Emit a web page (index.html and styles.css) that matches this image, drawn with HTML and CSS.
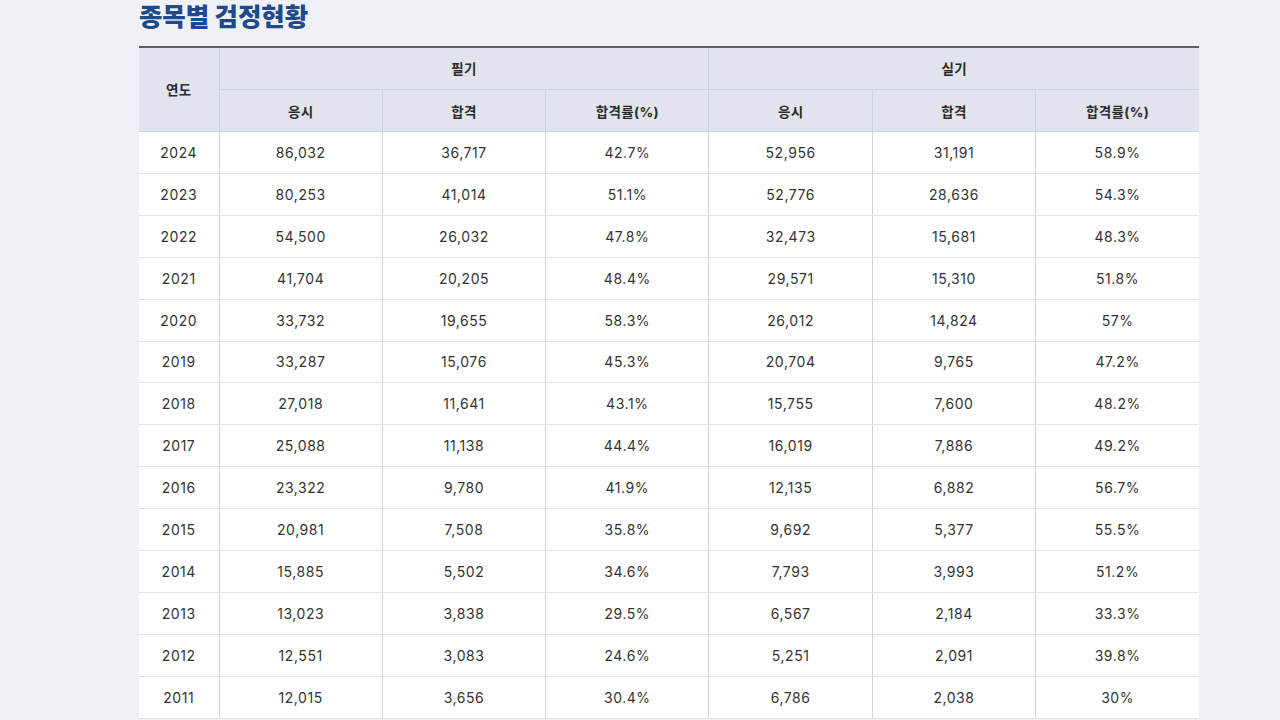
FILE: index.html
```html
<!DOCTYPE html>
<html lang="ko">
<head>
<meta charset="utf-8">
<title>종목별 검정현황</title>
<link rel="stylesheet" href="styles.css">
</head>
<body>
<main class="page">
  <h2 class="title">종목별 검정현황</h2>
  <table class="stats">
    <colgroup>
      <col class="c-year">
      <col class="c-data"><col class="c-data"><col class="c-data">
      <col class="c-data"><col class="c-data"><col class="c-data">
    </colgroup>
    <thead>
      <tr>
        <th rowspan="2" class="year-h">연도</th>
        <th colspan="3">필기</th>
        <th colspan="3">실기</th>
      </tr>
      <tr>
        <th>응시</th><th>합격</th><th>합격률(%)</th>
        <th>응시</th><th>합격</th><th>합격률(%)</th>
      </tr>
    </thead>
    <tbody>
      <tr><td>2024</td><td>86,032</td><td>36,717</td><td>42.7%</td><td>52,956</td><td>31,191</td><td>58.9%</td></tr>
      <tr><td>2023</td><td>80,253</td><td>41,014</td><td>51.1%</td><td>52,776</td><td>28,636</td><td>54.3%</td></tr>
      <tr><td>2022</td><td>54,500</td><td>26,032</td><td>47.8%</td><td>32,473</td><td>15,681</td><td>48.3%</td></tr>
      <tr><td>2021</td><td>41,704</td><td>20,205</td><td>48.4%</td><td>29,571</td><td>15,310</td><td>51.8%</td></tr>
      <tr><td>2020</td><td>33,732</td><td>19,655</td><td>58.3%</td><td>26,012</td><td>14,824</td><td>57%</td></tr>
      <tr><td>2019</td><td>33,287</td><td>15,076</td><td>45.3%</td><td>20,704</td><td>9,765</td><td>47.2%</td></tr>
      <tr><td>2018</td><td>27,018</td><td>11,641</td><td>43.1%</td><td>15,755</td><td>7,600</td><td>48.2%</td></tr>
      <tr><td>2017</td><td>25,088</td><td>11,138</td><td>44.4%</td><td>16,019</td><td>7,886</td><td>49.2%</td></tr>
      <tr><td>2016</td><td>23,322</td><td>9,780</td><td>41.9%</td><td>12,135</td><td>6,882</td><td>56.7%</td></tr>
      <tr><td>2015</td><td>20,981</td><td>7,508</td><td>35.8%</td><td>9,692</td><td>5,377</td><td>55.5%</td></tr>
      <tr><td>2014</td><td>15,885</td><td>5,502</td><td>34.6%</td><td>7,793</td><td>3,993</td><td>51.2%</td></tr>
      <tr><td>2013</td><td>13,023</td><td>3,838</td><td>29.5%</td><td>6,567</td><td>2,184</td><td>33.3%</td></tr>
      <tr><td>2012</td><td>12,551</td><td>3,083</td><td>24.6%</td><td>5,251</td><td>2,091</td><td>39.8%</td></tr>
      <tr><td>2011</td><td>12,015</td><td>3,656</td><td>30.4%</td><td>6,786</td><td>2,038</td><td>30%</td></tr>
    </tbody>
  </table>
</main>
</body>
</html>
```
FILE: styles.css
```css
html, body {
  margin: 0;
  padding: 0;
  background: #f0f1f6;
}
body {
  font-family: "Inter", "Noto Sans CJK KR", "Noto Sans", sans-serif;
  color: #333;
  height: 720px;
  overflow: hidden;
}
.page {
  width: 1060px;
  margin-left: 139px;
}
.title {
  margin: 0;
  height: 46px;
  line-height: 33px;
  font-size: 25.5px;
  font-weight: 800;
  color: #1d4a8c;
  letter-spacing: -0.1px;
}
.stats {
  width: 1060px;
  border-collapse: collapse;
  table-layout: fixed;
  border-top: 2px solid #5a5d63;
  background: #fff;
  font-size: 14px;
}
.c-year { width: 80px; }
.stats th {
  background: #e1e4ec;
  font-weight: 700;
  font-size: 13.5px;
  letter-spacing: 0.3px;
  color: #2b2b2b;
  height: 41px;
  padding: 0;
  border: 1px solid #cfd3db;
  border-top: 0;
  text-align: center;
}
.stats thead tr:first-child th { height: 39px; padding-bottom: 2px; }
.stats th:first-child { border-left: 0; }
.stats th:last-child { border-right: 0; }
.stats td {
  height: 40.92px;
  padding: 0;
  text-align: center;
  letter-spacing: 0.55px;
  border-bottom: 1px solid #e3e3e6;
  border-left: 1px solid #d5d5d9;
  color: #333;
}
.stats td:first-child { border-left: 0; }
```
